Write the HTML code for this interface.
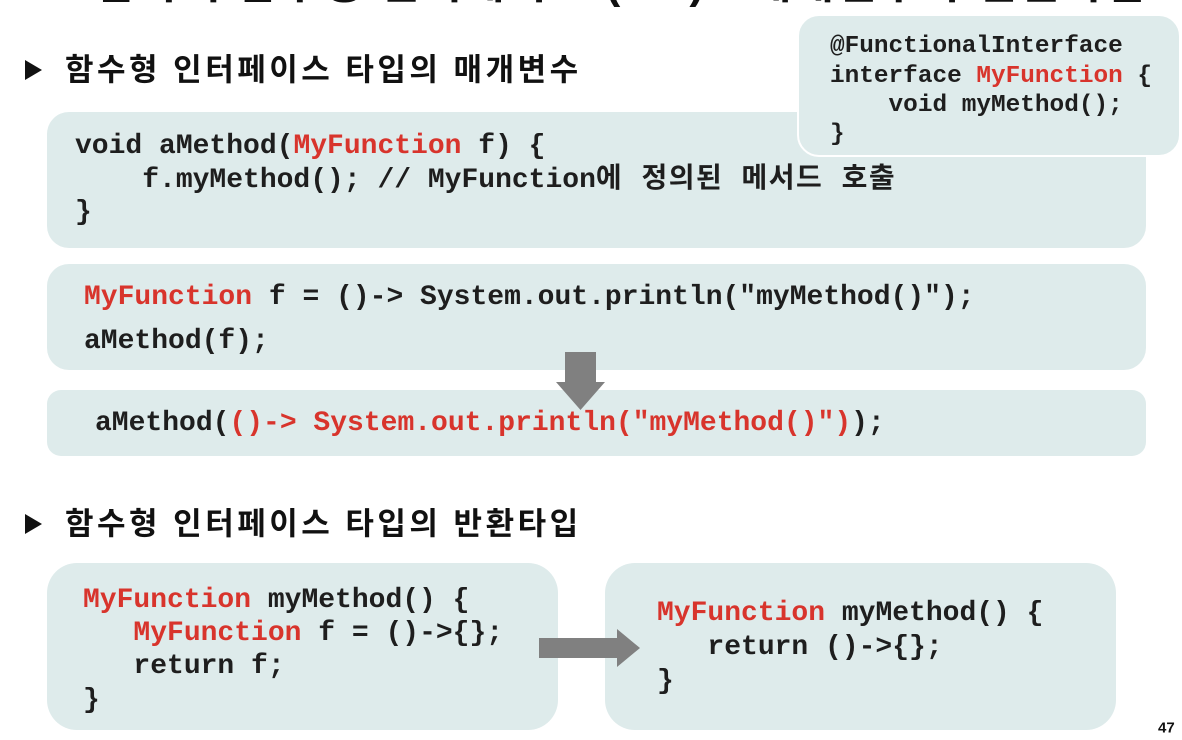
<!DOCTYPE html>
<html><head><meta charset="utf-8"><style>
body{margin:0;width:1182px;height:740px;background:#fff;position:relative;overflow:hidden;font-family:"Liberation Sans","Noto Sans CJK KR",sans-serif}
.box{position:absolute;background:#deebeb;border-radius:22px}
.c{position:absolute;font-family:"Liberation Mono","Noto Sans CJK KR",monospace;font-weight:bold;font-size:28px;color:#1e1e1e;white-space:pre;line-height:1;transform:translateY(-50%)}
.s{font-size:24.4px}
.r{color:#d8342c}
.h{position:absolute;font-weight:bold;font-size:31px;letter-spacing:3.5px;color:#111;white-space:pre;line-height:1;transform:translateY(-50%)}
.k{letter-spacing:1.5px}
.tri{position:absolute;width:0;height:0;border-top:10px solid transparent;border-bottom:10px solid transparent;border-left:17px solid #111}
</style></head><body>
<div class="h" style="left:0;top:-16px;font-size:44px;letter-spacing:2px">2.3  람다식 함수형 인터페이스 (3/3) - 매개변수와 반환타입</div>

<div class="tri" style="left:25px;top:60px"></div>
<div class="h" style="left:65px;top:70px">함수형 인터페이스 타입의 매개변수</div>

<div class="box" style="left:47px;top:112px;width:1099px;height:136px"></div>
<div class="box" style="left:797px;top:14px;width:384px;height:143px;border:2px solid #fff;box-sizing:border-box"></div>
<div class="c s" style="left:830px;top:47px">@FunctionalInterface</div>
<div class="c s" style="left:830px;top:77px">interface <span class="r">MyFunction</span> {</div>
<div class="c s" style="left:830px;top:106px">    void myMethod();</div>
<div class="c s" style="left:830px;top:135px">}</div>

<div class="c" style="left:75px;top:147px">void aMethod(<span class="r">MyFunction</span> f) {</div>
<div class="c" style="left:75px;top:181px">    f.myMethod(); // MyFunction<span class="k">에 정의된 메서드 호출</span></div>
<div class="c" style="left:75px;top:213px">}</div>

<div class="box" style="left:47px;top:264px;width:1099px;height:106px"></div>
<div class="c" style="left:84px;top:298px"><span class="r">MyFunction</span> f = ()-> System.out.println("myMethod()");</div>
<div class="c" style="left:84px;top:342px">aMethod(f);</div>

<div class="box" style="left:47px;top:390px;width:1099px;height:66px;border-radius:14px"></div>
<svg style="position:absolute;left:555px;top:352px" width="52" height="60"><polygon points="10,0 41,0 41,30 50,30 25.5,58 1,30 10,30" fill="#808080"/></svg>
<div class="c" style="left:95px;top:424px">aMethod(<span class="r">()-> System.out.println("myMethod()")</span>);</div>

<div class="tri" style="left:25px;top:514px"></div>
<div class="h" style="left:65px;top:524px">함수형 인터페이스 타입의 반환타입</div>

<div class="box" style="left:47px;top:563px;width:511px;height:167px;border-radius:30px"></div>
<div class="c" style="left:83px;top:601px"><span class="r">MyFunction</span> myMethod() {</div>
<div class="c" style="left:83px;top:634px">   <span class="r">MyFunction</span> f = ()->{};</div>
<div class="c" style="left:83px;top:667px">   return f;</div>
<div class="c" style="left:83px;top:701px">}</div>

<div class="box" style="left:605px;top:563px;width:511px;height:167px;border-radius:30px"></div>
<svg style="position:absolute;left:539px;top:629px" width="102" height="40"><polygon points="0,9 78,9 78,0 101,19 78,38 78,29 0,29" fill="#808080"/></svg>
<div class="c" style="left:657px;top:614px"><span class="r">MyFunction</span> myMethod() {</div>
<div class="c" style="left:657px;top:648px">   return ()->{};</div>
<div class="c" style="left:657px;top:682px">}</div>

<div class="h" style="left:1158px;top:728px;font-size:15px;letter-spacing:0">47</div>
</body></html>
